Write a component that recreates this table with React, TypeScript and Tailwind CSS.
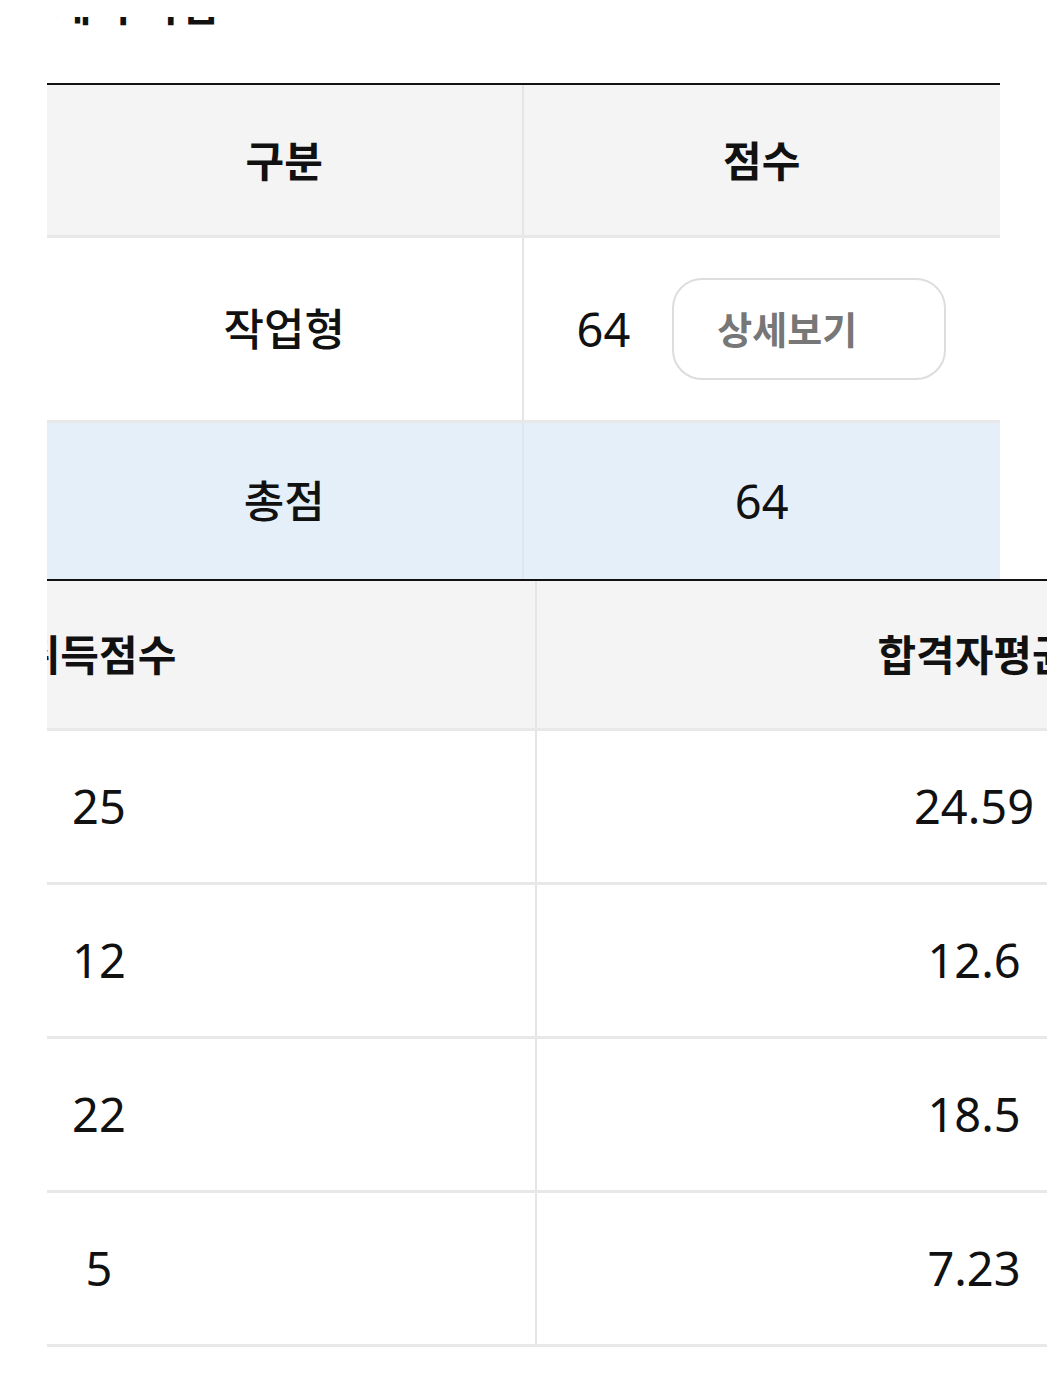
const font = "font-['Noto_Sans','Noto_Sans_CJK_KR',sans-serif]";

const results = [
  { got: "25", avg: "24.59" },
  { got: "12", avg: "12.6" },
  { got: "22", avg: "18.5" },
  { got: "5", avg: "7.23" },
];

export default function App() {
  return (
    <div className={`w-[1047px] h-[1397px] overflow-hidden bg-white text-[#111] ${font}`}>
      {/* heading, mostly hidden under the page header */}
      <div className="px-[47px] pt-[17px]">
        <div className="h-[12px] overflow-hidden">
          <h2 className="-mt-[36px] h-[48px] pl-[6px] text-[42px] leading-[48px] font-bold">세척 작업</h2>
        </div>
      </div>

      {/* summary table */}
      <div className="mx-[47px] mt-[54px] border-t-2 border-[#111]">
        <div className="grid grid-cols-2 bg-[#f4f4f4] border-b-[3px] border-[#e8e8e8]">
          <div className="h-[150px] flex items-center justify-center border-r-2 border-[#e5e5e5] text-[42px] font-bold">구분</div>
          <div className="h-[150px] flex items-center justify-center text-[42px] font-bold">점수</div>
        </div>
        <div className="grid grid-cols-2 border-b-[3px] border-[#e8e8e8]">
          <div className="h-[182px] flex items-center justify-center border-r-2 border-[#e5e5e5] text-[44px] font-medium">작업형</div>
          <div className="h-[182px] flex items-center pl-[53px] gap-[42px]">
            <span className="text-[47px]">64</span>
            <button className="w-[274px] h-[102px] rounded-[30px] border-2 border-[#dddddd] bg-white pl-[43px] text-left text-[38px] font-bold text-[#777]">
              상세보기
            </button>
          </div>
        </div>
        <div className="grid grid-cols-2 bg-[#e5effa]">
          <div className="h-[156px] flex items-center justify-center border-r-2 border-[#e0e6ee] text-[44px] font-medium">총점</div>
          <div className="h-[156px] flex items-center justify-center text-[47px]">64</div>
        </div>
      </div>

      {/* detail table, scrolled sideways */}
      <div className="ml-[47px] overflow-hidden">
        <div className="-ml-[384px] w-[1748px] border-t-2 border-[#111]">
          <div className="grid grid-cols-2 bg-[#f4f4f4] border-b-[3px] border-[#e8e8e8]">
            <div className="h-[147px] flex items-center justify-center border-r-2 border-[#e5e5e5] text-[42px] font-bold">취득점수</div>
            <div className="h-[147px] flex items-center justify-center text-[42px] font-bold">합격자평균</div>
          </div>
          {results.map((r) => (
            <div key={r.avg} className="grid grid-cols-2 border-b-[3px] border-[#e8e8e8]">
              <div className="h-[151px] flex items-center justify-center border-r-2 border-[#e5e5e5] text-[47px]">{r.got}</div>
              <div className="h-[151px] flex items-center justify-center text-[47px]">{r.avg}</div>
            </div>
          ))}
        </div>
      </div>
    </div>
  );
}
